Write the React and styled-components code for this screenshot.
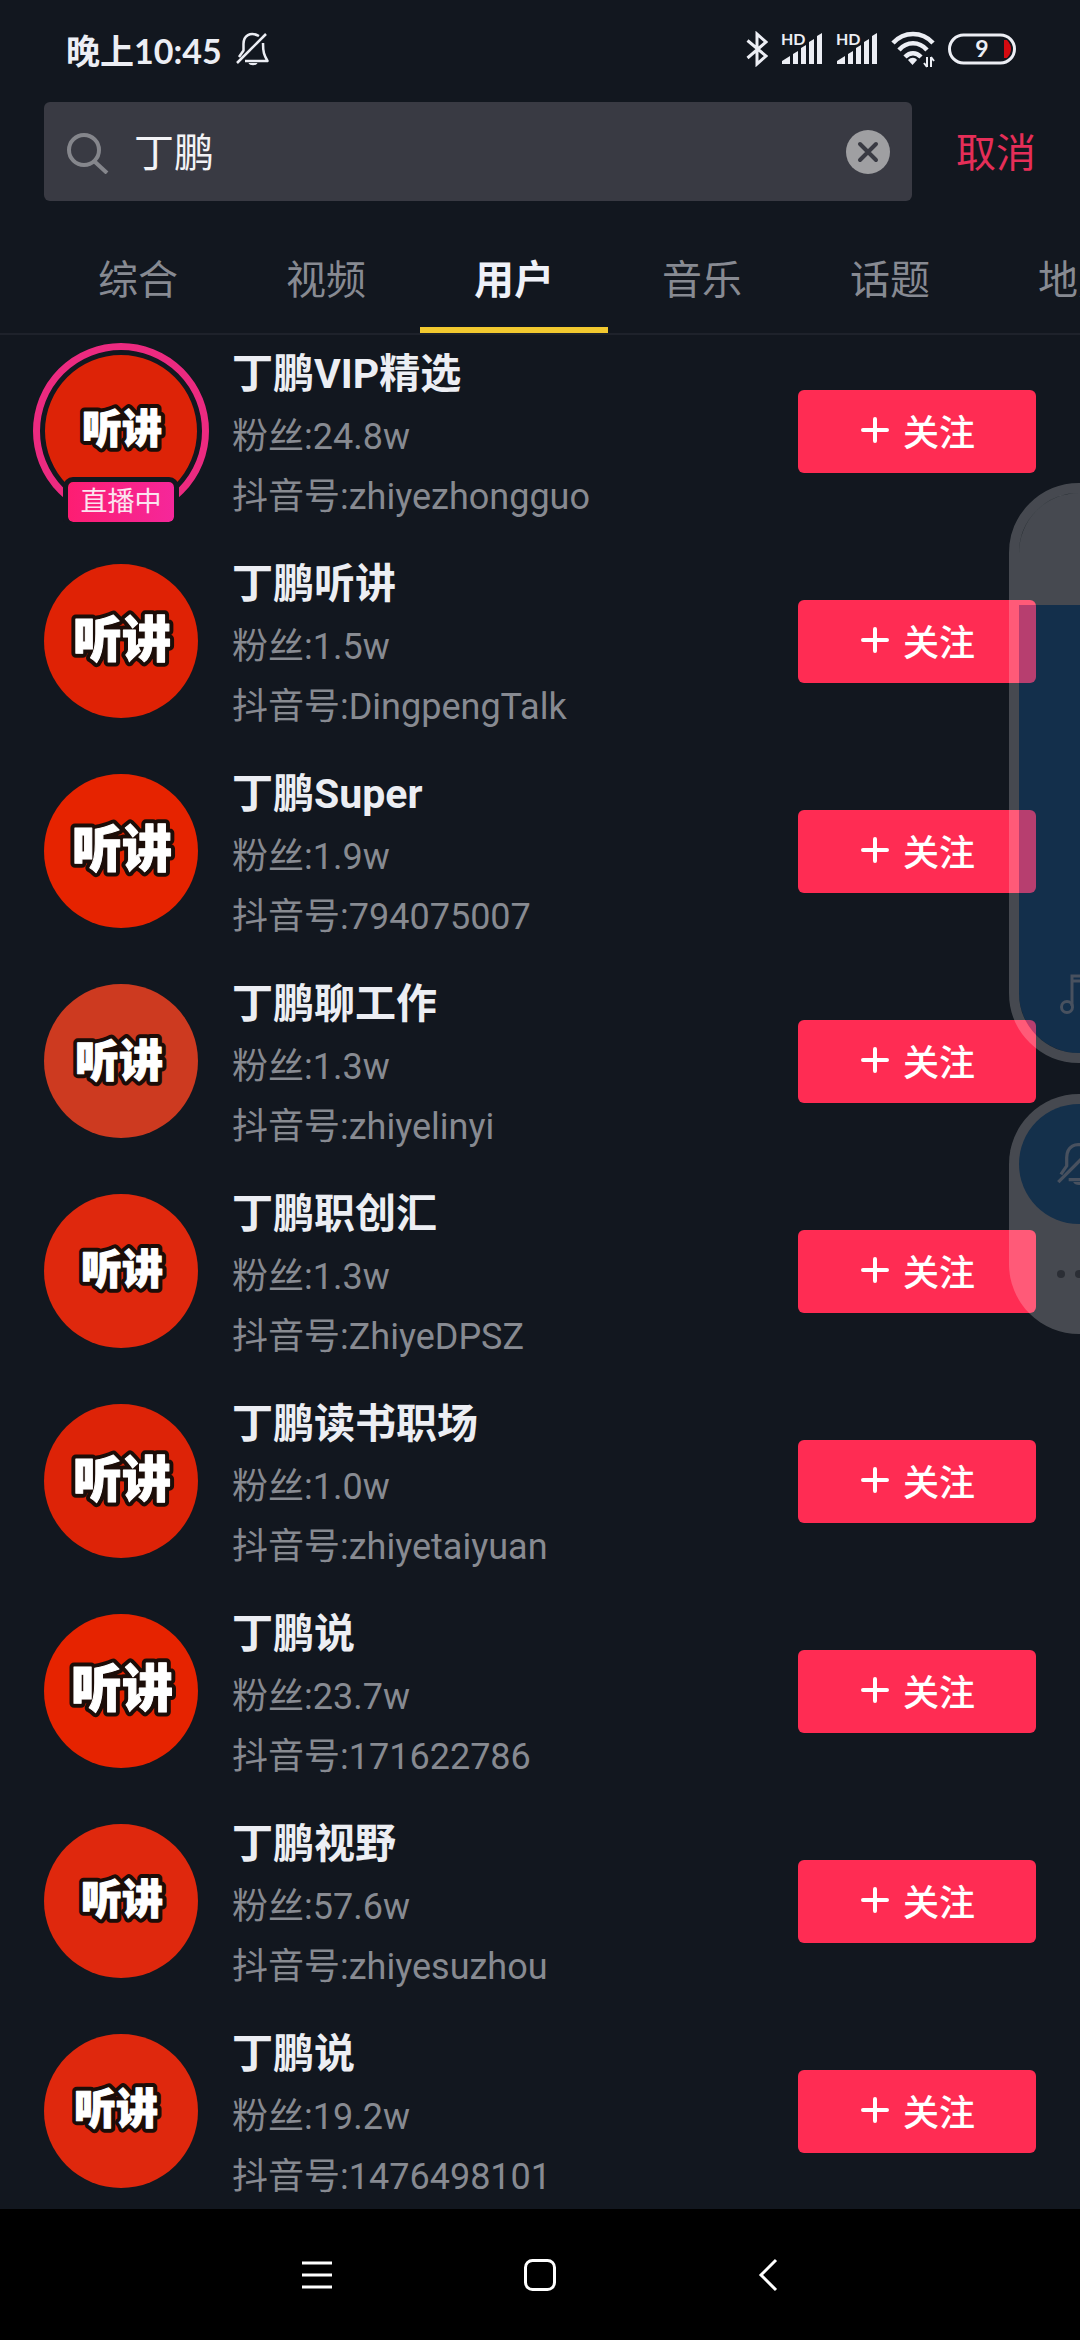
import React from "react";
import styled, { createGlobalStyle, css } from "styled-components";

const GlobalStyle = createGlobalStyle`
  * {
    box-sizing: border-box;
  }

  body {
    margin: 0;
    background: #12171f;
    color: #eceef4;
    font-family: Roboto, "Noto Sans CJK SC", sans-serif;
    overflow-x: hidden;
  }

  button {
    all: unset;
    box-sizing: border-box;
    cursor: pointer;
  }
`;

const Page = styled.div`
  position: relative;
  display: flex;
  flex-direction: column;
  min-height: 100vh;
  overflow: hidden;
`;

const StatusBar = styled.div`
  display: flex;
  align-items: center;
  justify-content: space-between;
  height: 102px;
  padding: 0 64px 4px 66px;
  font-family: Lato, "Noto Sans CJK SC", sans-serif;
  font-size: 34px;
  font-weight: 700;

  .time {
    display: flex;
    align-items: center;
    gap: 14px;
  }

  .icons {
    display: flex;
    align-items: center;
    gap: 13px;
  }

  svg {
    display: block;
  }
`;

const SearchRow = styled.form`
  display: flex;
  align-items: center;
  gap: 44px;
  padding: 0 44px;
`;

const SearchBox = styled.label`
  display: flex;
  flex: 1;
  align-items: center;
  gap: 24px;
  height: 99px;
  padding: 0 22px;
  border-radius: 6px;
  background: #393a43;

  svg {
    display: block;
    flex: none;
  }

  input {
    flex: 1;
    min-width: 0;
    padding: 0 0 4px;
    border: 0;
    outline: 0;
    background: none;
    color: #f3f3f6;
    font: inherit;
    font-size: 40px;
  }
`;

const Cancel = styled.button`
  padding-bottom: 4px;
  color: #e52e58;
  font-size: 40px;
`;

const Tabs = styled.nav`
  display: flex;
  height: 134px;
  padding-left: 44px;
  border-bottom: 2px solid #1e222b;
  overflow: hidden;
`;

const Tab = styled.button`
  flex: none;
  width: 188px;
  height: 132px;
  padding-top: 14px;
  border-bottom: 6px solid transparent;
  color: #878a92;
  font-size: 40px;
  line-height: 132px;
  text-align: center;

  ${({ $active }) => $active && css`
    border-color: #f2c92f;
    color: #eff1f8;
    font-weight: 700;
  `}
`;

const List = styled.ul`
  display: flex;
  flex-direction: column;
  gap: 18px;
  margin: 0;
  padding: 0;
  list-style: none;
`;

const Row = styled.li`
  display: flex;
  align-items: center;
  gap: 34px;
  height: 192px;
  padding: 0 44px;

  .info {
    flex: 1;
    min-width: 0;
    padding-top: 6px;
  }

  .name {
    color: #eceef3;
    font-size: 41px;
    font-weight: 700;
    line-height: 66px;
  }

  .desc {
    color: #878a91;
    font-size: 36px;
    line-height: 60px;
  }
`;

const Avatar = styled.div`
  position: relative;
  flex: none;
  width: 154px;
  height: 154px;
  border-radius: 50%;
  background: ${({ $color }) => $color};

  svg {
    display: block;
  }
`;

const LiveRing = styled.div`
  position: absolute;
  inset: -11px;
  border: 7px solid #ec2a80;
  border-radius: 50%;
  box-shadow: inset 0 0 0 5px #12171f;
`;

const LiveBadge = styled.span`
  position: absolute;
  bottom: -19px;
  left: 50%;
  width: 116px;
  height: 50px;
  border: 5px solid #12171f;
  border-radius: 10px;
  background: linear-gradient(90deg, #fd1d72, #f5279a) padding-box;
  color: #fbe3ef;
  font-size: 27px;
  line-height: 40px;
  text-align: center;
  transform: translateX(-50%);
`;

const Follow = styled.button`
  display: flex;
  align-items: center;
  justify-content: center;
  gap: 14px;
  width: 238px;
  height: 83px;
  padding: 0 0 2px 2px;
  border-radius: 6px;
  background: #ff2c53;
  color: #fff;
  font-size: 36px;
  font-weight: 500;
`;

const VolumePanel = styled.div`
  position: absolute;
  top: 483px;
  right: -69px;
  display: flex;
  flex-direction: column;
  width: 140px;
  height: 580px;
  border: 10px solid rgba(255, 255, 255, 0.22);
  border-radius: 70px;
  overflow: hidden;

  .empty {
    height: 112px;
    background: rgba(255, 255, 255, 0.22);
  }

  .level {
    flex: 1;
    padding: 368px 0 0 40px;
    background: rgba(24, 104, 173, 0.31);
  }

  svg {
    display: block;
  }
`;

const MutePanel = styled.div`
  position: absolute;
  top: 1094px;
  right: -69px;
  width: 140px;
  height: 240px;
  padding: 10px;
  border-radius: 70px;
  background: rgba(255, 255, 255, 0.22);

  .mute {
    display: flex;
    align-items: center;
    justify-content: center;
    width: 120px;
    height: 120px;
    border-radius: 50%;
    background: #14304b;
  }

  .dots {
    display: flex;
    justify-content: center;
    gap: 10px;
    margin-top: 46px;
  }

  .dots i {
    width: 8px;
    height: 8px;
    border-radius: 50%;
    background: #2b2e35;
  }
`;

const NavBar = styled.footer`
  display: flex;
  justify-content: center;
  height: 131px;
  margin-top: auto;
  background: #000;

  button {
    display: flex;
    align-items: center;
    justify-content: center;
    width: 226px;
  }
`;

const BellOff = ({ size, color, width }) => (
  <svg width={size} height={size} viewBox="0 0 34 34" fill="none" stroke={color} strokeWidth={width} strokeLinejoin="round">
    <path d="M23 4C14 -1 7.500 4 7.500 12v6.500L3 25" />
    <path d="M1 31L30 2" />
    <path d="M27 11c0 9 1 12 4.500 18H9" />
    <path d="M12.500 31h9c-1 3-8 3-9 0z" fill={color} stroke="none" />
  </svg>
);

const Bluetooth = () => (
  <svg width="22" height="36" viewBox="0 0 22 36" fill="none" stroke="#eceef4" strokeWidth="3">
    <path d="M1.500 9.500L20 25l-9 8V3l9 8L1.500 27" />
  </svg>
);

const Signal = () => (
  <svg width="42" height="36" viewBox="0 0 42 36" fill="#eceef4">
    <text x="0" y="14" fontFamily="Lato, sans-serif" fontSize="16" fontWeight="700">HD</text>
    <path d="M1 33v-3l8-5v8zM12 33V23l5-3v13zM20 33V17l5-3v19zM28 33V11l5-3v25zM36 33V5l5-3v31z" />
  </svg>
);

const Wifi = () => (
  <svg width="44" height="38" viewBox="0 0 44 38" fill="none" stroke="#eceef4" strokeWidth="4.500">
    <path d="M2 13C13 1 31 1 42 13M8 20c8-9 20-9 28 0M14 27c5-5 11-5 16 0" />
    <path d="M17 30c3-3 7-3 9 0l-4.500 5z" fill="#eceef4" stroke="none" />
    <path d="M36 27v10M33 33l3 4M40 37V27M40 27l3 4" strokeWidth="2" />
  </svg>
);

const Battery = () => (
  <svg width="68" height="32" viewBox="0 0 68 32">
    <path d="M56 7h3q8 9 0 18h-3z" fill="#d40a10" />
    <rect x="1.500" y="2" width="65" height="28" rx="14" fill="none" stroke="#eceef4" strokeWidth="3" />
    <text x="34" y="24" textAnchor="middle" fill="#eceef4" fontFamily="Lato, sans-serif" fontSize="23" fontWeight="700">9</text>
  </svg>
);

// white block lettering with a dark outline behind it
const Logo = ({ size, x = 78, y = 74 }) => {
  const text = {
    x,
    y: y + size * 0.38,
    textAnchor: "middle",
    fontSize: size,
    fontWeight: 900,
    fontFamily: '"Noto Sans CJK SC", sans-serif',
    strokeLinejoin: "round",
  };
  return (
    <svg width="154" height="154" viewBox="0 0 154 154">
      <text {...text} fill="#1c0d08" stroke="#1c0d08" strokeWidth="9" aria-hidden="true">听讲</text>
      <text {...text} fill="#fff" stroke="#fff" strokeWidth="1">听讲</text>
    </svg>
  );
};

const tabs = ["综合", "视频", "用户", "音乐", "话题", "地点"];

const users = [
  { name: "丁鹏VIP精选", fans: "24.8w", id: "zhiyezhongguo", color: "#dd2307", logo: { size: 40 }, live: true },
  { name: "丁鹏听讲", fans: "1.5w", id: "DingpengTalk", color: "#df2205", logo: { size: 49 } },
  { name: "丁鹏Super", fans: "1.9w", id: "794075007", color: "#e62300", logo: { size: 50 } },
  { name: "丁鹏聊工作", fans: "1.3w", id: "zhiyelinyi", color: "#cd3a20", logo: { size: 44, x: 75, y: 76 } },
  { name: "丁鹏职创汇", fans: "1.3w", id: "ZhiyeDPSZ", color: "#df280d", logo: { size: 41 } },
  { name: "丁鹏读书职场", fans: "1.0w", id: "zhiyetaiyuan", color: "#dd2307", logo: { size: 49 } },
  { name: "丁鹏说", fans: "23.7w", id: "171622786", color: "#e62300", logo: { size: 51 } },
  { name: "丁鹏视野", fans: "57.6w", id: "zhiyesuzhou", color: "#df280d", logo: { size: 41 } },
  { name: "丁鹏说", fans: "19.2w", id: "1476498101", color: "#df280d", logo: { size: 42, x: 72 } },
];

const User = ({ name, fans, id, color, logo, live }) => {
  return (
    <Row>
      <Avatar $color={color}>
        <Logo {...logo} />
        {live && <LiveRing />}
        {live && <LiveBadge>直播中</LiveBadge>}
      </Avatar>
      <div className="info">
        <div className="name">{name}</div>
        <div className="desc">粉丝:{fans}</div>
        <div className="desc">抖音号:{id}</div>
      </div>
      <Follow type="button">
        <svg width="28" height="28" viewBox="0 0 28 28" stroke="#fff" strokeWidth="4" strokeLinecap="round">
          <path d="M14 3v22M2 14h24" />
        </svg>
        关注
      </Follow>
    </Row>
  );
};

const App = () => {
  return (
    <Page>
      <GlobalStyle />
      <StatusBar>
        <div className="time">
          晚上10:45
          <BellOff size={34} color="#eceef4" width={2.5} />
        </div>
        <div className="icons">
          <Bluetooth />
          <Signal />
          <Signal />
          <Wifi />
          <Battery />
        </div>
      </StatusBar>
      <SearchRow onSubmit={(e) => e.preventDefault()}>
        <SearchBox>
          <svg width="44" height="44" viewBox="0 0 44 44" fill="none" stroke="#85868c" strokeWidth="4">
            <circle cx="18" cy="20" r="15" />
            <path d="M28 31l13 12" />
          </svg>
          <input type="text" aria-label="搜索" defaultValue="丁鹏" />
          <button type="button" aria-label="清除">
            <svg width="44" height="44" viewBox="0 0 44 44">
              <circle cx="22" cy="22" r="22" fill="#9f9fa2" />
              <path d="M14 14l16 16M30 14L14 30" stroke="#393a43" strokeWidth="4" strokeLinecap="round" />
            </svg>
          </button>
        </SearchBox>
        <Cancel type="button">取消</Cancel>
      </SearchRow>
      <Tabs>
        {tabs.map((tab) => (
          <Tab key={tab} type="button" $active={tab === "用户"}>{tab}</Tab>
        ))}
      </Tabs>
      <List>
        {users.map((user) => (
          <User key={user.id} {...user} />
        ))}
      </List>
      <NavBar>
        <button type="button" aria-label="菜单">
          <svg width="40" height="40" viewBox="0 0 40 40" stroke="#fff" strokeWidth="3">
            <path d="M8 8h30M8 20h30M8 32h30" />
          </svg>
        </button>
        <button type="button" aria-label="主页">
          <svg width="40" height="40" viewBox="0 0 40 40" fill="none" stroke="#fff" strokeWidth="3">
            <rect x="5.500" y="5.500" width="29" height="29" rx="7" />
          </svg>
        </button>
        <button type="button" aria-label="返回">
          <svg width="40" height="40" viewBox="0 0 40 40" fill="none" stroke="#fff" strokeWidth="3">
            <path d="M30 5L15 20l15 15" />
          </svg>
        </button>
      </NavBar>
      <VolumePanel>
        <div className="empty" />
        <div className="level">
          <svg width="42" height="42" viewBox="0 0 42 42" fill="none" stroke="#48515f" strokeWidth="3">
            <path d="M13 33V3h26v27M13 8h26" />
            <circle cx="8" cy="34" r="5.500" />
            <circle cx="34" cy="31" r="5.500" />
          </svg>
        </div>
      </VolumePanel>
      <MutePanel>
        <div className="mute">
          <BellOff size={44} color="#48515f" width={2.5} />
        </div>
        <div className="dots">
          <i />
          <i />
          <i />
        </div>
      </MutePanel>
    </Page>
  );
};

export default App;
